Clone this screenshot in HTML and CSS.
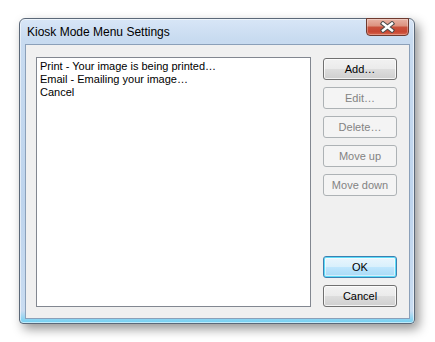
FILE: index.html
```html
<!DOCTYPE html>
<html>
<head>
<meta charset="utf-8">
<link rel="stylesheet" href="styles.css">
</head>
<body>
<div class="stage">
  <div class="window">
    <div class="titlebar">
      <span class="title">Kiosk Mode Menu Settings</span>
      <div class="close">
        <svg width="17" height="12" viewBox="0 0 17 12">
          <path d="M4 2.5 L13 9.5 M13 2.5 L4 9.5" stroke="#4a4a4a" stroke-width="4.4" stroke-linecap="square"/>
          <path d="M4 2.5 L13 9.5 M13 2.5 L4 9.5" stroke="#ffffff" stroke-width="2.4" stroke-linecap="square"/>
        </svg>
      </div>
    </div>
    <div class="client">
      <div class="listbox">
        <div class="item">Print - Your image is being printed…</div>
        <div class="item">Email - Emailing your image…</div>
        <div class="item">Cancel</div>
      </div>
      <div class="buttons">
        <div class="btn-group">
          <div class="btn">Add…</div>
          <div class="btn disabled">Edit…</div>
          <div class="btn disabled">Delete…</div>
          <div class="btn disabled">Move up</div>
          <div class="btn disabled">Move down</div>
        </div>
        <div class="btn-group">
          <div class="btn default">OK</div>
          <div class="btn">Cancel</div>
        </div>
      </div>
    </div>
  </div>
</div>
</body>
</html>
```

FILE: styles.css
```css
html, body {
  margin: 0;
  padding: 0;
  background: #ffffff;
}
body {
  width: 435px;
  height: 342px;
  overflow: hidden;
  font-family: "Liberation Sans", Arial, sans-serif;
}
.stage {
  padding: 18px 0 0 19px;
}
.window {
  box-sizing: border-box;
  width: 396px;
  height: 306px;
  border: 1px solid #5b6878;
  border-radius: 6px 6px 4px 4px;
  background: linear-gradient(#d8e6f7 0px, #c8dbf0 20px, #bed4ed 60%, #c9dcf1 96%, #6fd0f2 100%);
  box-shadow: 4px 5px 11px rgba(0,0,0,0.42), inset 0 0 0 1px rgba(255,255,255,0.55);
  display: flex;
  flex-direction: column;
  padding: 0 4px 4px 5px;
}
.titlebar {
  height: 25px;
  display: flex;
  align-items: center;
  padding-left: 2px;
}
.title {
  font-size: 12px;
  color: #000000;
  padding-top: 1px;
}
.close {
  margin-left: auto;
  margin-right: 1px;
  align-self: flex-start;
  margin-top: -1px;
  box-sizing: border-box;
  width: 43px;
  height: 18px;
  border: 1px solid #6e3a2f;
  border-radius: 0 0 4px 4px;
  background: linear-gradient(#e8b2a4 0%, #dd9380 42%, #c9503b 52%, #c84632 80%, #d96a50 100%);
  box-shadow: inset 0 0 0 1px rgba(255,255,255,0.3);
  display: flex;
  align-items: center;
  justify-content: center;
}
.close svg {
  display: block;
}
.client {
  flex: 1;
  border: 1px solid #8ba0b9;
  background: #f0f0f0;
  display: flex;
  gap: 12px;
  padding: 12px 12px 11px 10px;
}
.listbox {
  box-sizing: border-box;
  width: 275px;
  border: 1px solid #828790;
  background: #ffffff;
  padding: 2px 3px;
  font-size: 11px;
  line-height: 13px;
  color: #000000;
}
.item {
  white-space: nowrap;
}
.buttons {
  width: 74px;
  display: flex;
  flex-direction: column;
  justify-content: space-between;
  padding-top: 1px;
}
.btn-group {
  display: flex;
  flex-direction: column;
  gap: 7px;
}
.btn {
  box-sizing: border-box;
  height: 22px;
  border: 1px solid #707070;
  border-radius: 3px;
  background: linear-gradient(#f2f2f2 0%, #ebebeb 48%, #dddddd 52%, #cfcfcf 100%);
  box-shadow: inset 0 0 0 1px rgba(255,255,255,0.75);
  font-size: 11px;
  color: #000000;
  display: flex;
  align-items: center;
  justify-content: center;
}
.btn.disabled {
  border-color: #adb2b5;
  background: #f4f4f4;
  box-shadow: none;
  color: #838383;
}
.btn.default {
  border-color: #3c7fb1;
  background: linear-gradient(#eaf6fd 0%, #d9f0fc 48%, #bee6fd 52%, #a7d9f5 100%);
  box-shadow: inset 0 0 0 1px #5ddcf8, inset 0 0 0 2px rgba(255,255,255,0.5);
}
```
